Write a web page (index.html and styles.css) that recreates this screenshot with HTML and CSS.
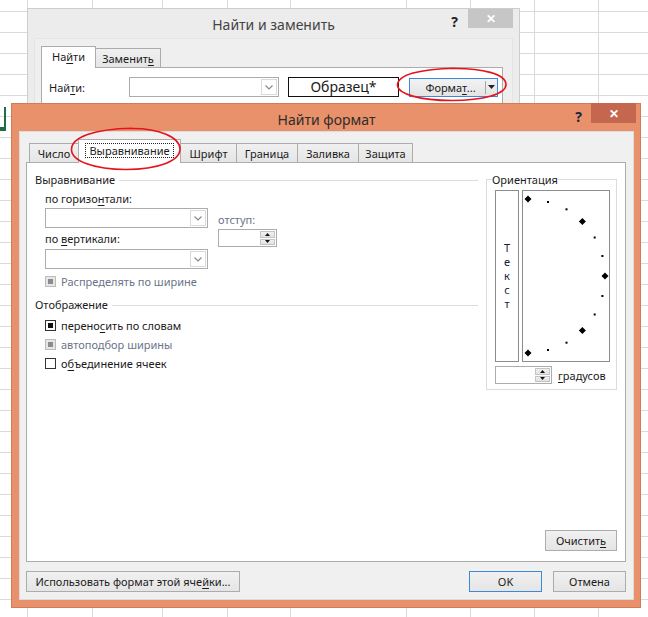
FILE: index.html
```html
<!DOCTYPE html>
<html lang="ru">
<head>
<meta charset="utf-8">
<title>Найти формат</title>
<link rel="stylesheet" href="styles.css">
</head>
<body>
<div class="sheet">
  <div></div><div></div><div></div><div></div><div></div>
  <div></div><div></div><div></div><div></div><div></div>
</div>
<div class="cell-sel"></div>

<!-- Background dialog: Найти и заменить -->
<div class="win win-back">
  <div class="titlebar back-title">
    <span></span>
    <span class="title">Найти и заменить</span>
    <span class="tb-ctrls"><span class="help">?</span><span class="close close-gray">✕</span></span>
  </div>
  <div class="back-client">
    <div class="tabs back-tabs">
      <div class="tab active w-find">На<u>й</u>ти</div>
      <div class="tab w-replace">Заменит<u>ь</u></div>
    </div>
    <div class="back-panel">
      <div class="find-row">
        <span class="find-lbl">Най<u>т</u>и:</span>
        <div class="combo find-combo">
          <span class="combo-btn"><svg width="8" height="5" viewBox="0 0 8 5"><polyline points="0.5,0.5 4,4 7.5,0.5" fill="none" stroke="#8a8a8a" stroke-width="1.2"/></svg></span>
        </div>
        <div class="sample">Образец*</div>
        <div class="split-btn">
          <span class="split-main">Форма<u>т</u>...</span>
          <span class="split-arrow"><svg width="7" height="4" viewBox="0 0 7 4"><polygon points="0,0 7,0 3.5,4" fill="#222"/></svg></span>
        </div>
      </div>
    </div>
  </div>
</div>

<!-- Foreground dialog: Найти формат -->
<div class="win win-front">
  <div class="titlebar front-title">
    <span></span>
    <span class="title">Найти формат</span>
    <span class="tb-ctrls"><span class="help">?</span><span class="close close-red">✕</span></span>
  </div>
  <div class="client">
    <div class="tabs front-tabs">
      <div class="tab w-num">Число</div>
      <div class="tab active w-align"><span class="focus">Выравнивание</span></div>
      <div class="tab w-font">Шрифт</div>
      <div class="tab w-border">Граница</div>
      <div class="tab w-fill">Заливка</div>
      <div class="tab w-prot">Защита</div>
    </div>
    <div class="panel">
      <div class="panel-top">
        <div class="left-col">
          <div class="group-title"><span>Выравнивание</span><i class="rule"></i></div>
          <div class="align-grid">
            <div class="align-col">
              <div class="lbl">по горизо<u>н</u>тали:</div>
              <div class="combo align-combo">
                <span class="combo-btn"><svg width="8" height="5" viewBox="0 0 8 5"><polyline points="0.5,0.5 4,4 7.5,0.5" fill="none" stroke="#8a8a8a" stroke-width="1.2"/></svg></span>
              </div>
              <div class="lbl lbl-gap">по <u>в</u>ертикали:</div>
              <div class="combo align-combo combo-gap">
                <span class="combo-btn"><svg width="8" height="5" viewBox="0 0 8 5"><polyline points="0.5,0.5 4,4 7.5,0.5" fill="none" stroke="#8a8a8a" stroke-width="1.2"/></svg></span>
              </div>
            </div>
            <div class="indent-col">
              <div class="lbl dis">отступ:</div>
              <div class="spin indent-spin">
                <span class="spin-btns">
                  <span class="spin-b"><svg width="5" height="3" viewBox="0 0 5 3"><polygon points="0,3 5,3 2.5,0" fill="#111"/></svg></span>
                  <span class="spin-b"><svg width="5" height="3" viewBox="0 0 5 3"><polygon points="0,0 5,0 2.5,3" fill="#111"/></svg></span>
                </span>
              </div>
            </div>
          </div>
          <div class="chk chk-first dis"><span class="box box-dis"><i></i></span>Распределять по ширине</div>
          <div class="group-title group-2"><span>Отображение</span><i class="rule"></i></div>
          <div class="chk-list">
            <div class="chk"><span class="box box-ind"><i></i></span>перено<u>с</u>ить по словам</div>
            <div class="chk dis"><span class="box box-dis"><i></i></span>автоподбор ширины</div>
            <div class="chk"><span class="box"></span>о<u>б</u>ъединение ячеек</div>
          </div>
        </div>
        <fieldset class="orient">
          <legend>Ориентация</legend>
          <div class="orient-top">
            <div class="vtext"><span>Т</span><span>е</span><span>к</span><span>с</span><span>т</span></div>
            <div class="dial">
              <svg width="86" height="170" viewBox="0 0 86 170">
                <g fill="#000">
                  <polygon points="5,4.5 8.5,8 5,11.5 1.5,8"/>
                  <polygon points="59.4,27.1 62.9,30.6 59.4,34.1 55.9,30.6"/>
                  <polygon points="82,81.5 85.5,85 82,88.5 78.5,85"/>
                  <polygon points="59.4,135.9 62.9,139.4 59.4,142.9 55.9,139.4"/>
                  <polygon points="5,158.5 8.5,162 5,165.5 1.5,162"/>
                  <rect x="24" y="10" width="2" height="2"/>
                  <rect x="42.5" y="17.3" width="2" height="2"/>
                  <rect x="70.7" y="45.5" width="2" height="2"/>
                  <rect x="78.4" y="64" width="2" height="2"/>
                  <rect x="78.4" y="104" width="2" height="2"/>
                  <rect x="70.7" y="122.5" width="2" height="2"/>
                  <rect x="42.5" y="150.7" width="2" height="2"/>
                  <rect x="24" y="158" width="2" height="2"/>
                </g>
              </svg>
            </div>
          </div>
          <div class="deg-row">
            <div class="spin deg-spin">
              <span class="spin-btns">
                <span class="spin-b"><svg width="5" height="3" viewBox="0 0 5 3"><polygon points="0,3 5,3 2.5,0" fill="#111"/></svg></span>
                <span class="spin-b"><svg width="5" height="3" viewBox="0 0 5 3"><polygon points="0,0 5,0 2.5,3" fill="#111"/></svg></span>
              </span>
            </div>
            <span class="deg-lbl"><u>г</u>радусов</span>
          </div>
        </fieldset>
      </div>
      <div class="panel-bottom">
        <button class="btn btn-clear">Очистит<u>ь</u></button>
      </div>
    </div>
    <div class="footer">
      <button class="btn btn-use">Использовать формат этой яче<u>й</u>ки...</button>
      <span class="spacer"></span>
      <button class="btn btn-ok">OK</button>
      <button class="btn btn-cancel">Отмена</button>
    </div>
  </div>
</div>

<svg class="marks" width="648" height="617" viewBox="0 0 648 617">
  <path d="M452,68.5 C482,68 506,74 506,84.5 C506,94 484,100.5 452,100.5 C420,100.5 397.5,94 397.5,85 C397.5,75 420,68.8 455,68.2" fill="none" stroke="#e5131b" stroke-width="1.6"/>
  <path d="M128,128.5 C160,127.5 180,138 180,149 C180,161 158,169.5 126,169.5 C94,169.5 71.5,161 71.5,149.5 C71.5,137 94,129 132,128.2" fill="none" stroke="#e5131b" stroke-width="1.6"/>
</svg>
</body>
</html>
```

FILE: styles.css
```css
* { box-sizing: border-box; }
html, body { margin: 0; padding: 0; }
body {
  width: 648px;
  height: 617px;
  overflow: hidden;
  position: relative;
  background: #fff;
  font-family: "Noto Sans", "Open Sans", sans-serif;
  font-size: 11px;
  color: #1b1b1b;
}
u { text-decoration: underline; text-underline-offset: 2px; text-decoration-thickness: 1px; }

/* spreadsheet backdrop */
.sheet {
  display: grid;
  grid-template-columns: 28px 65px 70px 65px 63px 116px 64px 64px 64px 64px;
  height: 617px;
  background-image: repeating-linear-gradient(to bottom, transparent 0 20px, #dadada 20px 21px);
  background-position: 0 -9px;
}
.sheet > div { border-right: 1px solid #dadada; }
.cell-sel {
  position: absolute;
  left: 0; top: 107px;
  width: 6px; height: 24px;
  border-right: 2px solid #1f6e43;
  border-bottom: 4px solid #1f6e43;
}

/* windows */
.win { position: absolute; }
.titlebar {
  display: grid;
  grid-template-columns: 1fr auto 1fr;
  align-items: start;
}
.title { font-size: 14px; color: #333; white-space: nowrap; }
.tb-ctrls { display: flex; justify-content: flex-end; align-items: flex-start; }
.help { font-weight: bold; font-size: 14px; color: #1d2440; line-height: 1; }
.close {
  width: 45px; height: 20px;
  display: flex; align-items: center; justify-content: center;
  color: #fff; font-size: 12px; font-weight: bold;
}

/* back dialog */
.win-back {
  left: 27px; top: 8px;
  width: 493px; height: 110px;
  background: #ececec;
  border: 1px solid #cdcdcd;
}
.back-title { height: 29px; }
.back-title .title { padding-top: 6px; color: #444; }
.back-title .help { margin-top: 6px; margin-right: 10px; color: #222; }
.back-title .close { margin-top: 0; margin-right: 6px; height: 19px; background: #c6c6c6; }
.back-client {
  margin: 0 6px 0 6px;
  height: 90px;
  border: 1px solid #e4e4e4;
  background: #efefef;
  padding: 7px 9px 0 6px;
}
.tabs { display: flex; align-items: flex-end; position: relative; z-index: 1; }
.tab {
  height: 19px;
  border: 1px solid #acacac;
  border-bottom: none;
  background: linear-gradient(#f0f0f0, #e5e5e5);
  display: flex; align-items: center; justify-content: center;
  white-space: nowrap;
  line-height: 15px;
  margin-right: -1px;
}
.tab.active { background: #fff; padding-bottom: 2px; margin-bottom: -1px; height: 24px; }
.back-tabs .tab { height: 19px; font-size: 11px; }
.back-tabs .tab.active { height: 22px; }
.w-find { width: 55px; }
.w-replace { width: 66px; }
.back-panel {
  background: #fff;
  border: 1px solid #acacac;
  height: 60px;
  padding: 9px 0 0 7px;
}
.find-row { display: flex; align-items: center; }
.find-lbl { width: 80px; }
.combo {
  height: 20px;
  background: #fff;
  border: 1px solid #acacac;
  display: flex; justify-content: flex-end;
  padding: 1px;
}
.combo-btn {
  width: 16px;
  border: 1px solid #dadada;
  display: flex; align-items: center; justify-content: center;
}
.find-combo { width: 150px; }
.sample {
  margin-left: 9px;
  width: 111px; height: 20px;
  border: 1px solid #111;
  background: #fff;
  font-size: 14px;
  line-height: 18px;
  text-align: center;
}
.split-btn {
  margin-left: 10px;
  width: 89px; height: 19px;
  border: 1px solid #3c8ad6;
  background: linear-gradient(#f2f2f2, #e4e4e4);
  display: flex; align-items: center;
}
.split-main { flex: 1; text-align: center; padding-left: 6px; }
.split-arrow {
  width: 11px; height: 13px;
  border-left: 1px solid #a8a8a8;
  display: flex; align-items: center; justify-content: center;
  margin-right: 1px;
}

/* front dialog */
.win-front {
  left: 11px; top: 103px;
  width: 630px; height: 505px;
  background: #e9916a;
  border: 1px solid #d07c58;
  padding: 0 6px 7px 7px;
  display: flex; flex-direction: column;
}
.front-title { height: 27px; flex: none; }
.front-title .title { padding-top: 6px; font-size: 14px; color: #2d2d2d; }
.front-title .help { margin-top: 6px; margin-right: 9px; }
.close-red { background: #c5674f; margin-right: -2px; height: 20px; margin-top: -1px; }
.client {
  flex: 1;
  background: #f0f0f0;
  border: 1px solid #dcdcdc;
  padding: 7px 7px 7px 6px;
  display: flex; flex-direction: column;
}
.front-tabs { padding-left: 3px; height: 23px; }
.front-tabs .tab.active { height: 24px; }
.w-num { width: 50px; }
.w-align { width: 103px; }
.w-font { width: 57px; }
.w-border { width: 62px; }
.w-fill { width: 62px; }
.w-prot { width: 55px; }
.focus {
  border: 1px dotted #222;
  padding: 0 3px;
  line-height: 13px;
}
.panel {
  height: 400px;
  background: #fff;
  border: 1px solid #acacac;
  display: flex; flex-direction: column;
  padding: 9px 8px 10px 8px;
}
.panel-top { display: flex; gap: 8px; align-items: flex-start; }
.left-col { width: 443px; }
.group-title {
  display: flex; align-items: center;
  height: 16px;
  line-height: 16px;
  white-space: nowrap;
}
.group-title .rule { flex: 1; height: 1px; background: #dcdcdc; margin-left: 4px; }
.group-2 { margin-top: 6px; }
.align-grid { display: flex; gap: 10px; margin-top: 3px; padding-left: 10px; }
.align-col { width: 163px; display: flex; flex-direction: column; }
.lbl { line-height: 15px; height: 15px; white-space: nowrap; }
.align-combo { margin-top: 2px; width: 163px; }
.lbl-gap { margin-top: 3px; }
.combo-gap { margin-top: 3px; }
.indent-col { padding-top: 21px; display: flex; flex-direction: column; }
.dis { color: #6b7488; }
.spin {
  height: 18px;
  background: #fff;
  border: 1px solid #acacac;
  display: flex; justify-content: flex-end;
  padding: 1px;
}
.indent-spin { width: 59px; margin-top: 2px; }
.spin-btns { width: 15px; display: flex; flex-direction: column; gap: 1px; }
.spin-b {
  flex: 1;
  background: linear-gradient(#f0f0f0, #e2e2e2);
  border: 1px solid #c4c4c4;
  display: flex; align-items: center; justify-content: center;
}
.chk {
  display: flex; align-items: center;
  height: 19px;
  padding-left: 10px;
  white-space: nowrap;
}
.chk-first { margin-top: 3px; }
.chk-list { margin-top: 3px; }
.box {
  width: 11px; height: 11px;
  border: 1px solid #333;
  background: #fff;
  margin-right: 5px;
  display: flex; align-items: center; justify-content: center;
}
.box i { display: block; width: 5px; height: 5px; }
.box-ind i { background: #111; }
.box-dis { border-color: #bcbcbc; background: #e6e6e6; }
.box-dis i { background: #8c8c8c; }

/* orientation */
.orient {
  width: 131px;
  margin: 0;
  border: 1px solid #dcdcdc;
  padding: 3px 6px 5px 8px;
}
.orient legend {
  padding: 0;
  margin-left: -3px;
  line-height: 15px;
  color: #1b1b1b;
}
.orient-top { display: flex; gap: 3px; height: 172px; }
.vtext {
  width: 24px;
  border: 1px solid #8c8c8c;
  display: flex; flex-direction: column; align-items: center; justify-content: center;
  line-height: 14px;
  color: #1a1a3a;
}
.dial { width: 88px; border: 1px solid #8c8c8c; }
.dial svg { display: block; }
.deg-row { display: flex; align-items: center; margin-top: 4px; gap: 6px; }
.deg-spin { width: 57px; }
.deg-lbl { white-space: nowrap; }

.panel-bottom { margin-top: auto; display: flex; justify-content: flex-end; }

.btn {
  font-family: inherit;
  font-size: 11px;
  color: #1b1b1b;
  height: 21px;
  padding: 0;
  border: 1px solid #acacac;
  background: linear-gradient(#f0f0f0, #e5e5e5);
  display: flex; align-items: center; justify-content: center;
  white-space: nowrap;
}
.btn-clear { width: 72px; }
.footer { display: flex; margin-top: 9px; gap: 11px; }
.spacer { flex: 1; }
.btn-use { width: 214px; }
.btn-ok { width: 73px; border-color: #3c8ad6; }
.btn-cancel { width: 73px; }

.marks { position: absolute; left: 0; top: 0; pointer-events: none; z-index: 5; }
```
